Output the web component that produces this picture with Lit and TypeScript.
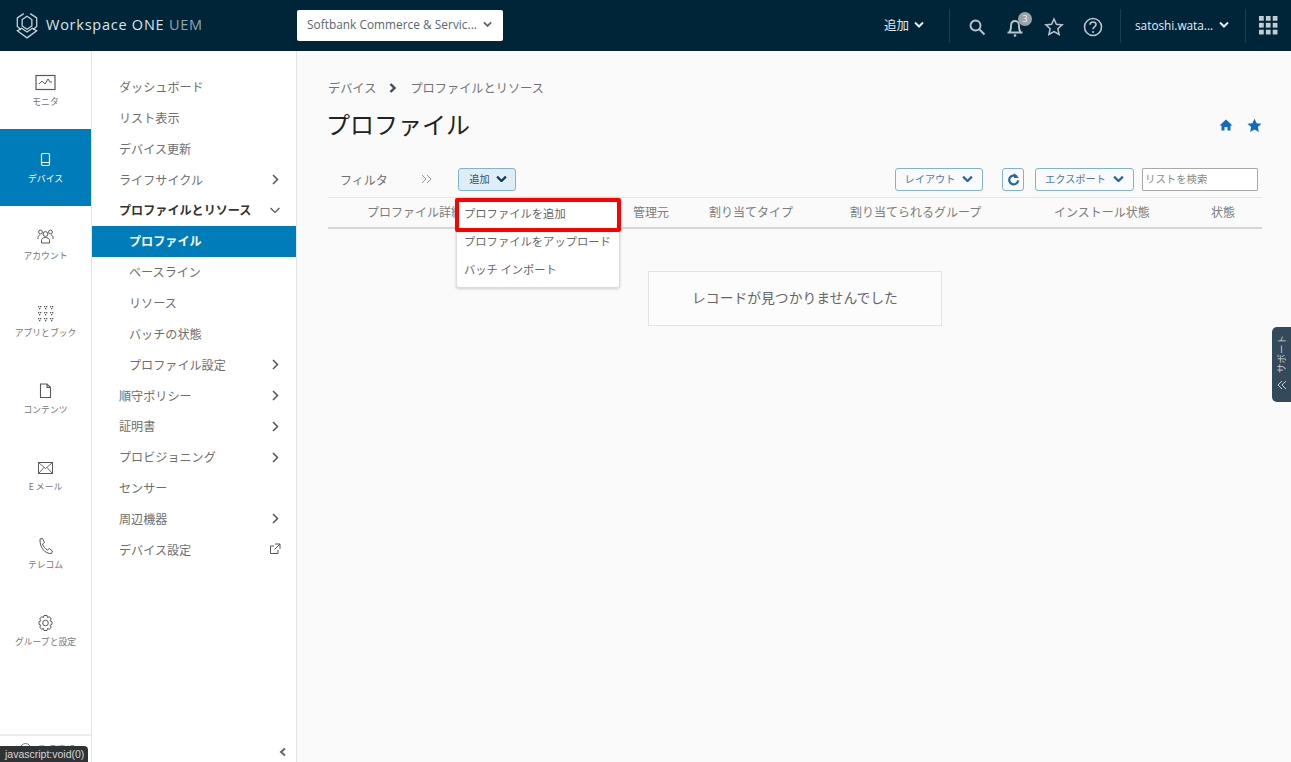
import { LitElement, html, css, svg } from "lit";
import { customElement } from "lit/decorators.js";

const chevPath = svg`<path d="M3 4.500 L7 8.500 L11 4.500" fill="none" stroke="currentColor" stroke-width="2"/>`;
const chev = (w: number) => html`<svg class="chev" width=${w} height=${w * 0.7} viewBox="2 3 10 7">${chevPath}</svg>`;
const dots: number[][] = [];
for (const gy of [2, 8, 14]) for (const gx of [3, 9, 15]) for (const [a, b] of [[0, 0], [2, 0], [1, 2]]) dots.push([gx + a, gy + b]);
const rail = [
  { label: "モニタ", icon: svg`<rect x="1" y="2.500" width="19" height="14" fill="none" stroke="currentColor" stroke-width="1.200"/><path d="M4 11l3-3 3 3 3-5 2 3h2" fill="none" stroke="currentColor"/>` },
  { label: "デバイス", active: true, icon: svg`<rect x="6.500" y="3.500" width="8" height="12" rx="1.200" fill="none" stroke="currentColor" stroke-width="1.200"/><path d="M7 12.500h7" stroke="currentColor"/>` },
  { label: "アカウント", icon: svg`<circle cx="10.500" cy="7" r="2.400" fill="none" stroke="currentColor"/><circle cx="5.500" cy="5" r="1.900" fill="none" stroke="currentColor"/><circle cx="15.500" cy="5" r="1.900" fill="none" stroke="currentColor"/><path d="M6.500 16v-2.500c0-2 1.800-3 4-3s4 1 4 3V16zM3 12v-1.500c0-1.300 1-2.500 2-2.500M18 12v-1.500c0-1.300-1-2.500-2-2.500" fill="none" stroke="currentColor"/>` },
  { label: "アプリとブック", icon: svg`${dots.map(([x, y]) => svg`<rect x=${x} y=${y} width="1.300" height="1.300" fill="currentColor"/>`)}` },
  { label: "コンテンツ", icon: svg`<path d="M5.500 3h6.500l3.500 3.500v10h-10zM12 3v3.500h3.500" fill="none" stroke="currentColor" stroke-width="1.100"/>` },
  { label: "E メール", icon: svg`<rect x="3.500" y="4.500" width="14" height="11" fill="none" stroke="currentColor"/><path d="M3.500 4.500l7 6 7-6M3.500 15.500l5.500-6M17.500 15.500l-5.500-6" fill="none" stroke="currentColor" stroke-width=".9"/>` },
  { label: "テレコム", icon: svg`<path d="M5 3l2.500-.5 2 4-2 1.500c.8 2.500 2.500 4.500 5 6l1.800-1.500 3.200 2.500-1 2.500c-6.500.5-12-6-11.500-14.500z" fill="none" stroke="currentColor"/>` },
  { label: "グループと設定", icon: svg`<circle cx="10.500" cy="10" r="2.800" fill="none" stroke="currentColor"/><path d="M9 2.500h3l.5 2 2-.8 1.800 2.300-1.300 1.700 2 1v2.600l-2 1 1.300 1.700-1.800 2.300-2-.8-.5 2H9l-.5-2-2 .8L4.700 14l1.300-1.700-2-1V8.700l2-1L4.700 6l1.800-2.300 2 .8z" fill="none" stroke="currentColor"/>` },
];
type N = { t: string; sub?: boolean; bold?: boolean; active?: boolean; arrow?: string };
const nav: N[] = [
  { t: "ダッシュボード" },
  { t: "リスト表示" },
  { t: "デバイス更新" },
  { t: "ライフサイクル", arrow: "r" },
  { t: "プロファイルとリソース", bold: true, arrow: "d" },
  { t: "プロファイル", sub: true, active: true },
  { t: "ベースライン", sub: true },
  { t: "リソース", sub: true },
  { t: "バッチの状態", sub: true },
  { t: "プロファイル設定", sub: true, arrow: "r" },
  { t: "順守ポリシー", arrow: "r" },
  { t: "証明書", arrow: "r" },
  { t: "プロビジョニング", arrow: "r" },
  { t: "センサー" },
  { t: "周辺機器", arrow: "r" },
  { t: "デバイス設定", arrow: "x" },
];
const cols = [
  { t: "プロファイル詳細", w: 266 },
  { t: "管理元", w: 76 },
  { t: "割り当てタイプ", w: 141 },
  { t: "割り当てられるグループ", w: 204 },
  { t: "インストール状態", w: 157 },
  { t: "状態", w: 30 },
];

@customElement("app-root")
export class AppRoot extends LitElement {
  static styles = css`
    :host { display: block; width: 1291px; height: 762px; position: relative; overflow: hidden; background: #fafafa;
      font-family: "Noto Sans CJK JP", "Noto Sans", sans-serif; color: #707070; font-size: 12px; }
    svg { display: block; flex: none; }
    .top { height: 51px; background: #002538; display: flex; align-items: center; color: #dfe5e8; }
    .logo { width: 46px; display: flex; justify-content: center; padding-left: 7px; box-sizing: border-box; color: #c8d2d8; }
    .brand { width: 251px; font: 400 14.500px "Open Sans", sans-serif; letter-spacing: .75px; color: #dce3e6; padding-bottom: 2px; white-space: nowrap; }
    .brand span { color: #8fa5b0; }
    .org { width: 206px; height: 31px; box-sizing: border-box; background: #fff; border-radius: 2px; display: flex; align-items: center; padding: 0 10px 3px;
      font: 11.800px "Open Sans", sans-serif; color: #58666d; gap: 6px; white-space: nowrap; letter-spacing: .05px; }
    .spacer { flex: 1; }
    .add { font-size: 12.500px; display: flex; align-items: center; gap: 5px; width: 65px; color: #e6ebee; box-sizing: border-box; padding-bottom: 2px; }
    .vsep { width: 1px; height: 34px; background: #1a3d50; flex: none; }
    .icons { display: flex; align-items: center; width: 170px; padding-left: 18px; box-sizing: border-box; color: #b9c4ca; position: relative; height: 22px; margin-top: 2px; }
    .icons svg { margin-right: 19px; }
    .icons svg.s { margin-right: 20px; }
    .icons svg.b { margin-right: 18px; }
    .badge { position: absolute; left: 68px; top: -4px; width: 14px; height: 14px; border-radius: 50%; background: #9ba3a8; color: #eee; font: 9px/14px "Open Sans", sans-serif; text-align: center; }
    .user { width: 124px; font: 11.800px "Open Sans", sans-serif; color: #e6ebee; display: flex; align-items: center; gap: 6px; padding: 0 0 2px 14px; box-sizing: border-box; white-space: nowrap; }
    .grid { width: 45px; display: flex; justify-content: center; box-sizing: border-box; color: #c3ccd1; }
    .body { display: flex; height: 711px; }
    .rail { width: 92px; box-sizing: border-box; background: #fff; border-right: 1px solid #e4e4e4; padding-top: 1px; position: relative; flex: none; }
    .ri { height: 77.100px; display: flex; flex-direction: column; align-items: center; padding-top: 21px; box-sizing: border-box; gap: 3px; color: #767676; font-size: 8.800px; white-space: nowrap; line-height: 14px; }
    .ri svg { color: #56585a; }
    .ri.on { background: #007cbb; color: #fff; }
    .ri.on svg { color: #fff; }
    .rfoot { position: absolute; left: 0; right: 0; top: 683px; border-top: 2px solid #ececec; padding: 6px 0 0 37px; font-size: 9.500px; color: #888; height: 26px; box-sizing: border-box; }
    .globe { position: absolute; left: 20px; top: 7px; width: 9px; height: 9px; border: 1px solid #777; border-radius: 50%; }
    .side { width: 205px; box-sizing: border-box; background: #fff; border-right: 1px solid #e4e4e4; padding-top: 20.500px; position: relative; flex: none; }
    .ni { height: 30.870px; box-sizing: border-box; padding: 0 15px 1px 27px; display: flex; align-items: center; justify-content: space-between; color: #6e6e6e; font-size: 12.100px; }
    .ni.sub { padding-left: 37px; }
    .ni.bold { font-weight: 700; color: #333; }
    .ni.on { background: #007cbb; color: #fff; font-weight: 700; }
    .ni svg { color: #555; }
    .collapse { position: absolute; right: 8px; bottom: 5px; color: #666; }
    .main { flex: 1; padding: 27px 29px 0 31px; position: relative; min-width: 0; }
    .crumb { display: flex; align-items: center; gap: 11px; font-size: 12.200px; color: #6f7478; height: 20px; }
    .crumb svg { color: #3f4a55; }
    .titlerow { display: flex; justify-content: space-between; align-items: center; height: 44px; margin-top: 4px; }
    h1 { margin: 0 0 0 -2px; font-weight: 400; font-size: 24px; color: #222; line-height: 44px; }
    .fav { display: flex; gap: 14px; color: #0c6cc4; margin-top: 2px; }
    .toolbar { display: flex; align-items: center; height: 26px; margin-top: 20px; padding: 0 4px 0 12px; }
    .filter { width: 81px; color: #6f6f6f; font-size: 12px; }
    .raquo { width: 37px; color: #888; }
    .btn { height: 23px; box-sizing: border-box; border: 1px solid #7fb2d3; border-radius: 3px; display: flex; align-items: center; justify-content: center; gap: 7px; font-size: 10.200px; color: #4c7aa5; background: #fafafa; padding-bottom: 1px; }
    .btn.add2 { width: 58px; background: #dfeef6; color: #38505f; gap: 6px; padding-left: 2px; }
    .btn.add2 svg { color: #0f3a55; }
    .btn svg { color: #2467a8; }
    .tright { margin-left: auto; display: flex; align-items: center; }
    .b-layout { width: 88px; }
    .b-refresh { width: 22px; margin: 0 11px 0 19px; }
    .b-export { width: 99px; }
    .search { width: 116px; height: 23px; box-sizing: border-box; border: 1px solid #a8a8a8; background: #fff; font-size: 10.400px; color: #888; padding: 1px 2px; line-height: 17px; margin-left: 8px; border-radius: 1px; }
    .thead { display: flex; align-items: center; margin-top: 5px; height: 26px; padding-bottom: 3px; border-top: 1px solid #e6e6e6; border-bottom: 2px solid #d6d6d6; padding-left: 39px; font-size: 12px; color: #7c7c7c; white-space: nowrap; }
    .thead span { flex: none; }
    .empty { width: 294px; height: 55px; box-sizing: border-box; border: 1px solid #e3e3e3; background: #fcfcfc; margin: 42px 0 0 320px; padding-bottom: 4px; display: flex; align-items: center; justify-content: center; color: #666; font-size: 13.800px; white-space: nowrap; }
    .menu { position: absolute; left: 158.500px; top: 146px; width: 164px; height: 91px; box-sizing: border-box; background: #fff; border: 1px solid #dcdcdc; border-radius: 3px; box-shadow: 0 1px 3px rgba(0,0,0,.18); padding-top: 1px; }
    .mi { height: 28px; display: flex; align-items: center; padding-left: 7.500px; color: #666; font-size: 11.300px; white-space: nowrap; }
    .mark { position: absolute; left: 157.500px; top: 146.500px; width: 166px; height: 34px; box-sizing: border-box; border: 4px solid #f00; border-radius: 2px; }
    .tip { position: absolute; left: 0; top: 746px; width: 88px; height: 16px; background: #2f3336; border-radius: 0 4px 0 0; color: #d6d6d6; font: 10.500px/17px "Liberation Sans", sans-serif; padding-left: 5px; box-sizing: border-box; white-space: nowrap; }
    .support { position: absolute; left: 1272px; top: 327px; width: 19px; height: 75px; background: #34495b; border-radius: 5px 0 0 5px; color: #c6d0d6; display: flex; flex-direction: column; align-items: center; font-size: 9.500px; padding-top: 8px; box-sizing: border-box; gap: 7px; }
    .support span { writing-mode: vertical-rl; text-orientation: sideways; transform: rotate(180deg); line-height: 19px; }
  `;

  render() {
    return html`
      <div class="top">
        <div class="logo"><svg width="26" height="28" viewBox="0 0 24 26" fill="none" stroke="currentColor" stroke-width="1.200"><path d="M9 1.500L3 5.500v8l3.500 3M15 1.500l6 4v8l-3.500 3M12 4l-4.500 3v6l4.500 3 4.500-3V7zM3 17.500l9 6.500 9-6.500-4-2.500-5 3.500L7 15z"/></svg></div>
        <div class="brand">Workspace ONE <span>UEM</span></div>
        <div class="org">Softbank Commerce &amp; Servic...${chev(9)}</div>
        <div class="spacer"></div>
        <div class="add">追加${chev(10)}</div>
        <div class="vsep"></div>
        <div class="icons">
          <svg class="s" width="18" height="18" viewBox="0 0 18 18" fill="none" stroke="currentColor" stroke-width="1.900"><circle cx="7.500" cy="7.500" r="5"/><path d="M11 11l5.500 5.500"/></svg>
          <svg class="b" width="20" height="20" viewBox="0 0 20 20" fill="none" stroke="currentColor" stroke-width="1.900"><path d="M1.500 15.500h15M3.500 15c1.500-1.500 1.500-3 1.500-6 0-3 1.500-5 4-5s4 2 4 5c0 3 0 4.500 1.500 6"/><circle cx="9" cy="18.500" r="1.300" fill="currentColor" stroke="none"/></svg>
          <svg width="20" height="20" viewBox="0 0 20 20" fill="none" stroke="currentColor" stroke-width="1.500"><path d="M10 2l2.400 5.300 5.800.6-4.300 3.900 1.200 5.700L10 14.600 4.900 17.500l1.200-5.700L1.800 7.900l5.800-.6z"/></svg>
          <svg width="20" height="20" viewBox="0 0 20 20" fill="none" stroke="currentColor" stroke-width="1.600"><circle cx="10" cy="10" r="8.500"/><path d="M7 7.800c0-1.800 1.300-2.800 3-2.800s3 1 3 2.500c0 2.300-3 2.400-3 4.700"/><circle cx="10" cy="15" r="1" fill="currentColor" stroke="none"/></svg>
          <div class="badge">3</div>
        </div>
        <div class="vsep"></div>
        <div class="user">satoshi.wata...${chev(10)}</div>
        <div class="vsep"></div>
        <div class="grid"><svg width="19" height="19" viewBox="0 0 18 18" fill="currentColor">${[0, 6.500, 13].map((y) => [0, 6.500, 13].map((x) => svg`<rect x=${x} y=${y} width="4.500" height="4.500"/>`))}</svg></div>
      </div>
      <div class="body">
        <div class="rail">
          ${rail.map((r) => html`<div class="ri ${r.active ? "on" : ""}"><svg width="21" height="19" viewBox="0 0 21 19">${r.icon}</svg>${r.label}</div>`)}
          <div class="rfoot"><div class="globe"></div>言語情報</div>
        </div>
        <div class="side">
          ${nav.map((n) => html`<div class="ni ${n.sub ? "sub" : ""} ${n.bold ? "bold" : ""} ${n.active ? "on" : ""}">
            <span>${n.t}</span>${this.arrow(n.arrow)}</div>`)}
          <div class="collapse"><svg width="10" height="10" viewBox="0 0 10 10" fill="none" stroke="currentColor" stroke-width="2"><path d="M7 1.500L3 5l4 3.500"/></svg></div>
        </div>
        <div class="main">
          <div class="crumb">デバイス<svg width="12" height="12" viewBox="0 0 12 12" fill="none" stroke="currentColor" stroke-width="2.400"><path d="M3.500 2l4 4-4 4"/></svg>プロファイルとリソース</div>
          <div class="titlerow"><h1>プロファイル</h1>
            <div class="fav">
              <svg width="14" height="14" viewBox="0 0 14 14" fill="currentColor"><path d="M7 1.500L.5 7.500h2v5h3v-3.500h3v3.500h3v-5h2z"/></svg>
              <svg width="15" height="15" viewBox="0 0 20 20" fill="currentColor"><path d="M10 1l2.800 6 6.500.7-4.800 4.400 1.300 6.400L10 15.300 4.200 18.500l1.300-6.400L.7 7.700 7.200 7z"/></svg>
            </div>
          </div>
          <div class="toolbar">
            <div class="filter">フィルタ</div>
            <div class="raquo"><svg width="11" height="10" viewBox="0 0 11 10" fill="none" stroke="currentColor" stroke-width=".9"><path d="M1 1l4 4-4 4M6 1l4 4-4 4"/></svg></div>
            <div class="btn add2">追加${chev(11)}</div>
            <div class="tright">
              <div class="btn b-layout">レイアウト${chev(11)}</div>
              <div class="btn b-refresh"><svg width="13" height="14" viewBox="0 0 14 14" fill="none" stroke="currentColor" stroke-width="2.400"><path d="M10.500 4.500A4.800 4.800 0 1 0 12 8.500"/><path d="M7.500 .500v5.500h5.500" stroke="none" fill="currentColor"/></svg></div>
              <div class="btn b-export">エクスポート${chev(11)}</div>
              <div class="search">リストを検索</div>
            </div>
          </div>
          <div class="thead">${cols.map((c) => html`<span style="width:${c.w}px">${c.t}</span>`)}</div>
          <div class="empty">レコードが見つかりませんでした</div>
          <div class="menu">
            <div class="mi">プロファイルを追加</div>
            <div class="mi">プロファイルをアップロード</div>
            <div class="mi">バッチ インポート</div>
          </div>
          <div class="mark"></div>
        </div>
      </div>
      <div class="tip">javascript:void(0)</div>
      <div class="support"><span>サポート</span><svg width="10" height="10" viewBox="0 0 10 10" fill="none" stroke="currentColor"><path d="M5 1L1 5l4 4M9 1L5 5l4 4"/></svg></div>
    `;
  }

  arrow(a?: string) {
    if (a === "r") return html`<svg width="12" height="12" viewBox="0 0 12 12" fill="none" stroke="currentColor" stroke-width="1.500"><path d="M4 2l4.500 4.500L4 11"/></svg>`;
    if (a === "d") return html`<svg width="12" height="12" viewBox="0 0 12 12" fill="none" stroke="currentColor" stroke-width="1.200"><path d="M1.500 4l4.500 4.500L10.500 4"/></svg>`;
    if (a === "x") return html`<svg width="12" height="12" viewBox="0 0 12 12" fill="none" stroke="currentColor"><path d="M9 7v3.500H1.500V3H5M6 1h5v5M11 1L5.500 6.500"/></svg>`;
    return null;
  }
}
